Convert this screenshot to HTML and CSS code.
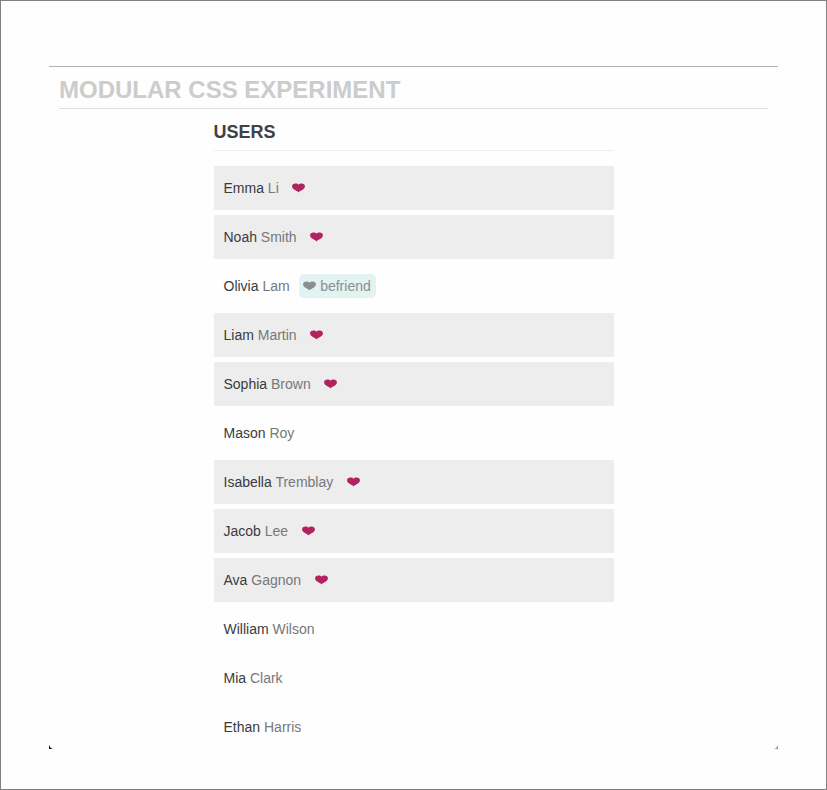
FILE: index.html
```html
<!DOCTYPE html>
<html lang="en">
<head>
<meta charset="utf-8">
<title>Modular CSS Experiment</title>
<link rel="stylesheet" href="styles.css">
</head>
<body>
<svg class="defs" width="0" height="0"><symbol id="heart" viewBox="0 0 13 10"><path d="M6.500 9.600C5.600 8.200 3.900 7.800 2.100 6.600C.7 5.700 .1 4.700 .1 3.300C.1 1.500 1.500 .5 3.400 .5C4.900 .5 6 .9 6.500 1.700C7 .9 8.100 .5 9.600 .5C11.500 .5 12.900 1.500 12.900 3.300C12.900 4.700 12.300 5.700 10.900 6.600C9.100 7.800 7.400 8.200 6.500 9.600Z"/></symbol></svg>
<main class="app">
  <h1 class="title">MODULAR CSS EXPERIMENT</h1>
  <section class="users">
    <h2 class="heading">USERS</h2>
    <ul class="list">
      <li class="user friend"><span>Emma <span class="last">Li</span></span><span class="action"><svg class="heart"><use href="#heart"/></svg></span></li>
      <li class="user friend"><span>Noah <span class="last">Smith</span></span><span class="action"><svg class="heart"><use href="#heart"/></svg></span></li>
      <li class="user"><span>Olivia <span class="last">Lam</span></span><span class="action befriend"><svg class="heart"><use href="#heart"/></svg>befriend</span></li>
      <li class="user friend"><span>Liam <span class="last">Martin</span></span><span class="action"><svg class="heart"><use href="#heart"/></svg></span></li>
      <li class="user friend"><span>Sophia <span class="last">Brown</span></span><span class="action"><svg class="heart"><use href="#heart"/></svg></span></li>
      <li class="user"><span>Mason <span class="last">Roy</span></span></li>
      <li class="user friend"><span>Isabella <span class="last">Tremblay</span></span><span class="action"><svg class="heart"><use href="#heart"/></svg></span></li>
      <li class="user friend"><span>Jacob <span class="last">Lee</span></span><span class="action"><svg class="heart"><use href="#heart"/></svg></span></li>
      <li class="user friend"><span>Ava <span class="last">Gagnon</span></span><span class="action"><svg class="heart"><use href="#heart"/></svg></span></li>
      <li class="user"><span>William <span class="last">Wilson</span></span></li>
      <li class="user"><span>Mia <span class="last">Clark</span></span></li>
      <li class="user"><span>Ethan <span class="last">Harris</span></span></li>
    </ul>
  </section>
  <svg class="corner left" viewBox="0 0 4 4"><path d="M0 0Q1 3 4 4H0Z"/></svg>
  <svg class="corner right" viewBox="0 0 4 4"><path d="M4 0Q3 3 0 4H4Z"/></svg>
</main>
</body>
</html>
```

FILE: styles.css
```css
* { box-sizing: border-box; }
html { height: 100%; }
body {
  height: 790px;
  margin: 0;
  padding: 65px 48px 0;
  border: 1px solid #808080;
  background: #fefefe;
  overflow: hidden;
  color: #3a3b3f;
  font: 14px/24px "Liberation Sans", Arial, sans-serif;
}
.defs { display: none; }
.app {
  position: relative;
  height: 683px;
  padding: 0 10px;
  border-top: 1px solid #b2b2b2;
}
.title {
  height: 42px;
  margin: 0;
  border-bottom: 1px solid #ddd;
  color: #ccc;
  font-size: 24px;
  line-height: 45px;
}
.users { width: 400px; margin: 0 auto; }
.heading {
  height: 42px;
  margin: 0 0 15px;
  border-bottom: 1px solid #eee;
  color: #404147;
  font-size: 18px;
  line-height: 46px;
}
.list {
  display: grid;
  gap: 5px;
  margin: 0;
  padding: 0;
  list-style: none;
}
.user {
  display: flex;
  align-items: center;
  gap: 9px;
  height: 44px;
  padding: 0 10px;
}
.friend { background: #ededed; }
.last { color: #77787b; }
.action {
  display: flex;
  align-items: center;
  gap: 4px;
  height: 24px;
  padding: 0 5px 0 4.5px;
  border-radius: 5px;
  color: #b0235f;
}
.befriend { background: #e2f3f1; color: #8c8e8e; }
.heart { width: 13px; height: 10px; fill: currentColor; }
.corner { position: absolute; bottom: 0; width: 4px; height: 4px; }
.left { left: 0; fill: #111; }
.right { right: 0; fill: #a69b55; }
```
